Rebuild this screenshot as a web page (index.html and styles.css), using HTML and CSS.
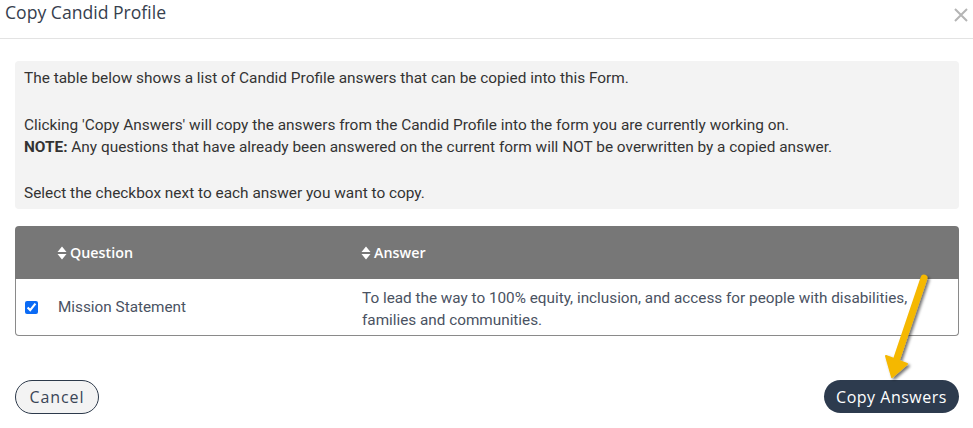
FILE: index.html
```html
<!DOCTYPE html>
<html>
<head>
<meta charset="utf-8">
<link rel="stylesheet" href="styles.css">
</head>
<body>
<div class="modal">
  <header class="modal-header">
    <h1 class="modal-title">Copy Candid Profile</h1>
    <button class="close" aria-label="Close">
      <svg width="14" height="14" viewBox="0 0 14 14"><path d="M1 1L13 13M13 1L1 13" stroke="#b5b5b5" stroke-width="2" fill="none"/></svg>
    </button>
  </header>
  <div class="modal-body">
    <div class="info">
      <p>The table below shows a list of Candid Profile answers that can be copied into this Form.</p>
      <p>Clicking 'Copy Answers' will copy the answers from the Candid Profile into the form you are currently working on.<br><b>NOTE:</b> Any questions that have already been answered on the current form will NOT be overwritten by a copied answer.</p>
      <p>Select the checkbox next to each answer you want to copy.</p>
    </div>
    <div class="table">
      <div class="thead">
        <div class="cell c1"></div>
        <div class="cell c2"><span class="sort"><svg width="10" height="14" viewBox="0 0 10 14"><path d="M5 0.5L9.5 6H0.5Z M5 13.5L0.5 8H9.5Z" fill="#fff"/></svg></span>Question</div>
        <div class="cell c3"><span class="sort"><svg width="10" height="14" viewBox="0 0 10 14"><path d="M5 0.5L9.5 6H0.5Z M5 13.5L0.5 8H9.5Z" fill="#fff"/></svg></span>Answer</div>
      </div>
      <div class="trow">
        <div class="cell c1"><input type="checkbox" checked></div>
        <div class="cell c2">Mission Statement</div>
        <div class="cell c3">To lead the way to 100% equity, inclusion, and access for people with disabilities, families and communities.</div>
      </div>
    </div>
  </div>
  <footer class="modal-footer">
    <button class="btn btn-cancel">Cancel</button>
    <button class="btn btn-primary">Copy Answers</button>
  </footer>
  <svg class="arrow" width="80" height="120" viewBox="860 265 80 120">
    <defs>
      <filter id="sh" x="-50%" y="-50%" width="200%" height="200%">
        <feDropShadow dx="2" dy="2" stdDeviation="1.5" flood-color="#000" flood-opacity="0.55"/>
      </filter>
    </defs>
    <g filter="url(#sh)" fill="#f5b800" stroke="#f5b800" stroke-linejoin="round">
      <path d="M924 278L897 358" stroke-width="7" stroke-linecap="round" fill="none"/>
      <path d="M886 356L907 364L892 377Z" stroke-width="2"/>
    </g>
  </svg>
</div>
</body>
</html>
```
FILE: styles.css
```css
html, body {
  margin: 0;
  padding: 0;
  background: #fff;
}
body {
  width: 973px;
  height: 428px;
  overflow: hidden;
  font-family: Roboto, "Liberation Sans", sans-serif;
}
.modal {
  position: relative;
  width: 973px;
  height: 428px;
}
.modal-header {
  height: 39px;
  box-sizing: border-box;
  border-bottom: 1px solid #e3e3e3;
  display: flex;
  justify-content: space-between;
  align-items: flex-start;
  padding: 0 5px 0 5px;
}
.modal-title {
  margin: 0;
  font-family: "Open Sans", sans-serif;
  font-weight: 400;
  font-size: 17.6px;
  line-height: 24px;
  color: #36404e;
}
.close {
  border: 0;
  background: none;
  padding: 0;
  margin-top: 8px;
  margin-right: 0;
  width: 14px;
  height: 14px;
  display: block;
}
.close svg { display: block; }
.modal-body {
  padding: 22px 14px 0 15px;
}
.info {
  background: #f3f3f3;
  border-radius: 4px;
  padding: 6px 9px 5px 9px;
  font-size: 15.4px;
  line-height: 22px;
  color: #333;
}
.info p {
  margin: 0 0 24.5px 0;
}
.info p:last-child { margin-bottom: 0; }
.info b { font-weight: 700; }
.table {
  margin-top: 17px;
}
.thead, .trow {
  display: grid;
  grid-template-columns: 42px 304px 1fr;
}
.thead {
  background: #777;
  height: 53px;
  border-radius: 4px 4px 0 0;
  align-items: center;
  color: #fff;
  font-family: "Open Sans", sans-serif;
  font-weight: 600;
  font-size: 14.3px;
}
.thead .cell {
  display: flex;
  align-items: center;
}
.sort {
  display: inline-flex;
  margin-right: 3px;
}
.trow {
  border: 1px solid #8a8a8a;
  border-top: 0;
  border-radius: 0 0 4px 4px;
  min-height: 56px;
  align-items: center;
  font-size: 15.3px;
  line-height: 22px;
  color: #4a5262;
}
.trow .c1 {
  display: flex;
  padding-left: 9px;
}
.trow .c3 {
  padding: 8px 40px 4px 0;
}
.trow input {
  margin: 0;
  width: 13px;
  height: 13px;
  accent-color: #0b6bf5;
}
.modal-footer {
  display: flex;
  justify-content: space-between;
  align-items: flex-start;
  padding: 44px 14px 0 15px;
}
.btn {
  font-family: "Open Sans", sans-serif;
  font-size: 16px;
  letter-spacing: 0.5px;
  height: 34px;
  border-radius: 17px;
  cursor: pointer;
  padding: 0;
}
.btn-cancel {
  width: 84px;
  background: #f3f3f3;
  border: 1px solid #2d3a4b;
  color: #3a4556;
  letter-spacing: 0.9px;
}
.btn-primary {
  width: 135px;
  height: 33px;
  background: #2d3b4e;
  border: 0;
  color: #fff;
  font-weight: 500;
}
.arrow {
  position: absolute;
  left: 860px;
  top: 265px;
}
```
